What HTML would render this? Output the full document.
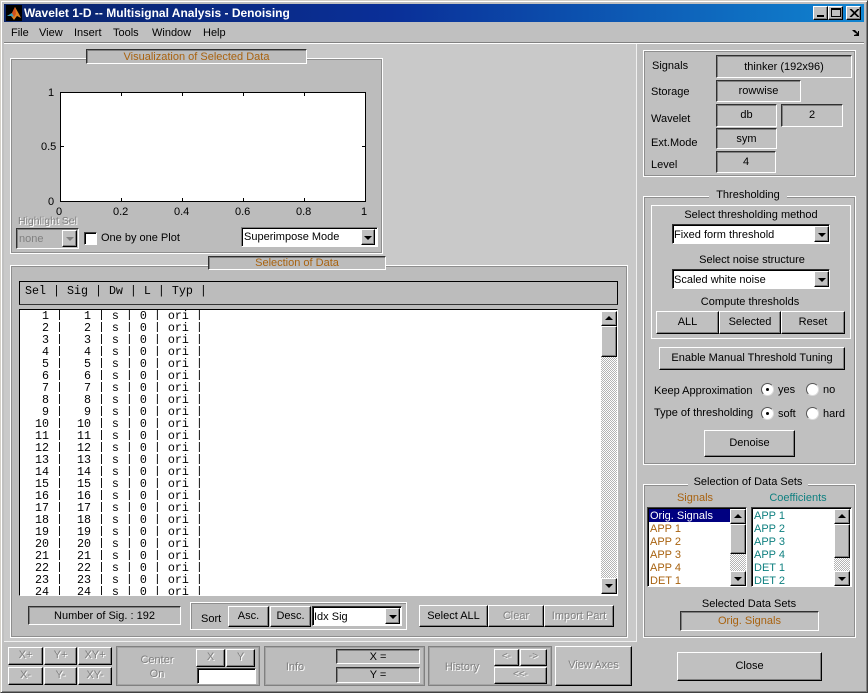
<!DOCTYPE html>
<html><head><meta charset="utf-8">
<style>
html,body{margin:0;padding:0}
body{width:868px;height:693px;overflow:hidden;background:#c0c0c0;position:relative;font:11px "Liberation Sans",sans-serif;color:#000}
div,span,pre{position:absolute;box-sizing:border-box;margin:0}
.t{height:20px;line-height:20px;white-space:nowrap}
.c{text-align:center}
.p{border:1px solid #fff;box-shadow:inset 0 0 0 1px #8e8e8e;background:#bcbcbc}
.q{border:1px solid #fff;box-shadow:inset 0 0 0 1px #8e8e8e;background:#c0c0c0}
.g{border:1px solid #808080;box-shadow:inset 0 0 0 1px #a4a4a4;background:#bcbcbc}
.s{border:1px solid;border-color:#303030 #fff #fff #303030;box-shadow:inset 1px 1px 0 #808080;text-align:center;white-space:nowrap}
.b{border:1px solid;border-color:#fff #000 #000 #fff;box-shadow:inset -1px -1px 0 #808080;background:#c0c0c0;text-align:center;white-space:nowrap}
.d{color:#808080;text-shadow:1px 1px 0 #fff}
.w{background:#fff;border:1px solid;border-color:#404040 #fff #fff #404040;box-shadow:inset 1px 1px 0 #000}
.o{color:#a8620f}
.e{color:#0f8080}
.a{width:0;height:0;border-left:4px solid transparent;border-right:4px solid transparent}
.dn{border-top:4px solid #000}
.up{border-bottom:4px solid #000}
.h{background:repeating-conic-gradient(#fff 0 25%,#b4b4b4 0 50%) 0 0/2px 2px}
.r{width:13px;height:13px;border-radius:50%;background:#fff;border:1px solid;border-color:#555 #ddd #ddd #555}
.r i{position:absolute;left:4px;top:4px;width:3px;height:3px;background:#000;border-radius:50%}
</style></head><body>
<div style="left:0;top:0;width:868px;height:693px;border:1px solid;border-color:#d4d0c8 #404040 #404040 #d4d0c8;box-shadow:inset 1px 1px 0 #fff,inset -1px -1px 0 #808080"></div>
<!-- title bar -->
<div style="left:4px;top:4px;width:860px;height:18px;background:linear-gradient(90deg,#0a246a,#0a2f98 45%,#1084d0)"></div>
<div style="left:6px;top:5px;width:16px;height:16px;background:#000"></div>
<svg style="position:absolute;left:6px;top:5px" width="16" height="16" viewBox="0 0 16 16"><path d="M1 11 L6 8 L9 2 L13 9 L15 13 L11 11 L8 15 L5 11Z" fill="#e08020"/><path d="M1 11 L6 8 L8 12 L5 11Z" fill="#30a0c0"/><path d="M6 8 L9 2 L10 9 L8 12Z" fill="#d05020"/></svg>
<div class="t" style="left:24px;top:3px;font-weight:bold;font-size:12px;color:#fff">Wavelet 1-D -- Multisignal Analysis - Denoising</div>
<div class="b" style="left:813px;top:6px;width:15px;height:14px"><div style="left:3px;top:8px;width:7px;height:2px;background:#000"></div></div>
<div class="b" style="left:828px;top:6px;width:15px;height:14px"><div style="left:2px;top:1px;width:10px;height:9px;border:1px solid #000;border-top-width:2px"></div></div>
<div class="b" style="left:846px;top:6px;width:15px;height:14px"><svg style="position:absolute;left:2px;top:2px" width="10" height="8"><path d="M1 0L9 8M2 0L10 8M9 0L1 8M10 0L2 8" stroke="#000" stroke-width="1"/></svg></div>
<!-- menu -->
<div class="t" style="left:11px;top:23px">File</div>
<div class="t" style="left:39px;top:23px">View</div>
<div class="t" style="left:74px;top:23px">Insert</div>
<div class="t" style="left:113px;top:23px">Tools</div>
<div class="t" style="left:152px;top:23px">Window</div>
<div class="t" style="left:203px;top:23px">Help</div>
<svg style="position:absolute;left:851px;top:29px" width="10" height="8"><path d="M1 1L4 1L7 4L7 2L8 2L8 7L3 7L3 6L6 5L3 3Z" fill="#000"/></svg>
<div style="left:4px;top:42px;width:860px;height:2px;background:linear-gradient(#808080 50%,#fff 50%)"></div>
<!-- light left area -->
<div style="left:4px;top:44px;width:632px;height:597px;background:#c9c9c9"></div>
<div style="left:4px;top:641px;width:632px;height:1px;background:#f0f0f0"></div>
<div style="left:636px;top:44px;width:1px;height:598px;background:#f0f0f0"></div>
<div style="left:627px;top:265px;width:1px;height:373px;background:#fff"></div>
<!-- panel 1 -->
<div class="p" style="left:10px;top:58px;width:373px;height:196px"></div>
<div class="s o" style="left:86px;top:49px;width:221px;height:15px;line-height:15px;background:#bcbcbc">Visualization of Selected Data</div>
<div style="left:60px;top:92px;width:306px;height:110px;background:#fff;border:1px solid #000"></div>
<div style="left:121px;top:93px;width:1px;height:3px;background:#000"></div><div style="left:182px;top:93px;width:1px;height:3px;background:#000"></div><div style="left:243px;top:93px;width:1px;height:3px;background:#000"></div><div style="left:304px;top:93px;width:1px;height:3px;background:#000"></div>
<div style="left:121px;top:198px;width:1px;height:3px;background:#000"></div><div style="left:182px;top:198px;width:1px;height:3px;background:#000"></div><div style="left:243px;top:198px;width:1px;height:3px;background:#000"></div><div style="left:304px;top:198px;width:1px;height:3px;background:#000"></div>
<div style="left:61px;top:146px;width:3px;height:1px;background:#000"></div><div style="left:362px;top:146px;width:3px;height:1px;background:#000"></div>
<div class="t" style="left:48px;top:83px">1</div>
<div class="t" style="left:41px;top:137px">0.5</div>
<div class="t" style="left:48px;top:192px">0</div>
<div class="t" style="left:56px;top:202px">0</div>
<div class="t" style="left:113px;top:202px">0.2</div>
<div class="t" style="left:174px;top:202px">0.4</div>
<div class="t" style="left:235px;top:202px">0.6</div>
<div class="t" style="left:296px;top:202px">0.8</div>
<div class="t" style="left:361px;top:202px">1</div>
<div class="t d" style="left:18px;top:211px;font-size:10.5px">Highlight Sel</div>
<div class="s" style="left:16px;top:228px;width:63px;height:21px;background:#bcbcbc"></div>
<div class="t d" style="left:19px;top:229px;text-shadow:none">none</div>
<div class="b" style="left:62px;top:230px;width:15px;height:17px"><div class="a" style="left:3px;top:6px;border-top:4px solid #808080"></div></div>
<div class="w" style="left:84px;top:232px;width:13px;height:13px"></div>
<div class="t" style="left:101px;top:228px">One by one Plot</div>
<div class="s" style="left:241px;top:227px;width:137px;height:20px;background:#fff;border-color:#808080 #fff #fff #808080;box-shadow:inset 1px 1px 0 #000"></div>
<div class="t" style="left:244px;top:227px">Superimpose Mode</div>
<div class="b" style="left:361px;top:229px;width:14px;height:16px"><div class="a dn" style="left:2px;top:6px"></div></div>
<!-- panel 2 -->
<div class="p" style="left:10px;top:265px;width:618px;height:373px"></div>
<div class="s o" style="left:208px;top:256px;width:178px;height:14px;line-height:13px;background:#bcbcbc">Selection of Data</div>
<div style="left:19px;top:281px;width:599px;height:24px;border:1px solid #000;border-bottom-color:#333;background:#bcbcbc"></div>
<pre style="left:25px;top:284px;font:11.67px/14px 'Liberation Mono',monospace">Sel | Sig | Dw | L | Typ |</pre>
<div style="left:19px;top:309px;width:599px;height:287px;background:#fff;border:1px solid;border-color:#000 #fff #fff #000;overflow:hidden"><pre style="left:1px;top:0;font:11.67px/12px 'Liberation Mono',monospace">   1 |   1 | s | 0 | ori |
   2 |   2 | s | 0 | ori |
   3 |   3 | s | 0 | ori |
   4 |   4 | s | 0 | ori |
   5 |   5 | s | 0 | ori |
   6 |   6 | s | 0 | ori |
   7 |   7 | s | 0 | ori |
   8 |   8 | s | 0 | ori |
   9 |   9 | s | 0 | ori |
  10 |  10 | s | 0 | ori |
  11 |  11 | s | 0 | ori |
  12 |  12 | s | 0 | ori |
  13 |  13 | s | 0 | ori |
  14 |  14 | s | 0 | ori |
  15 |  15 | s | 0 | ori |
  16 |  16 | s | 0 | ori |
  17 |  17 | s | 0 | ori |
  18 |  18 | s | 0 | ori |
  19 |  19 | s | 0 | ori |
  20 |  20 | s | 0 | ori |
  21 |  21 | s | 0 | ori |
  22 |  22 | s | 0 | ori |
  23 |  23 | s | 0 | ori |
  24 |  24 | s | 0 | ori |</pre>
<div style="left:0;top:0;width:580px;height:285px;background:repeating-linear-gradient(transparent 0 10px,#fff 10px 12px)"></div></div>
<div class="h" style="left:601px;top:311px;width:16px;height:283px"></div>
<div class="b" style="left:601px;top:311px;width:16px;height:15px"><div class="a up" style="left:3px;top:4px"></div></div>
<div class="b" style="left:601px;top:326px;width:16px;height:31px"></div>
<div class="b" style="left:601px;top:578px;width:16px;height:16px"><div class="a dn" style="left:3px;top:5px"></div></div>
<div class="s" style="left:28px;top:606px;width:153px;height:19px;line-height:19px;background:#bcbcbc">Number of Sig. : 192</div>
<div class="p" style="left:190px;top:602px;width:217px;height:28px;box-shadow:inset 1px 1px 0 #8e8e8e"></div>
<div class="t" style="left:201px;top:609px">Sort</div>
<div class="b" style="left:228px;top:606px;width:41px;height:21px;line-height:19px">Asc.</div>
<div class="b" style="left:270px;top:606px;width:41px;height:21px;line-height:19px">Desc.</div>
<div class="s" style="left:312px;top:606px;width:90px;height:20px;background:#fff;box-shadow:inset 1px 1px 0 #000"></div>
<div class="t" style="left:314px;top:607px">Idx Sig</div>
<div class="b" style="left:385px;top:608px;width:15px;height:16px"><div class="a dn" style="left:3px;top:6px"></div></div>
<div class="b" style="left:419px;top:605px;width:69px;height:22px;line-height:20px">Select ALL</div>
<div class="b d" style="left:488px;top:605px;width:56px;height:22px;line-height:20px">Clear</div>
<div class="b d" style="left:544px;top:605px;width:70px;height:22px;line-height:20px">Import Part</div>
<!-- bottom tools -->
<div class="b d" style="left:8px;top:647px;width:35px;height:18px;line-height:15px">X+</div>
<div class="b d" style="left:44px;top:647px;width:33px;height:18px;line-height:15px">Y+</div>
<div class="b d" style="left:78px;top:647px;width:34px;height:18px;line-height:15px">XY+</div>
<div class="b d" style="left:8px;top:667px;width:35px;height:18px;line-height:15px">X-</div>
<div class="b d" style="left:44px;top:667px;width:33px;height:18px;line-height:15px">Y-</div>
<div class="b d" style="left:78px;top:667px;width:34px;height:18px;line-height:15px">XY-</div>
<div class="g" style="left:116px;top:646px;width:144px;height:40px"></div>
<div class="t c d" style="left:127px;top:650px;width:60px">Center</div>
<div class="t c d" style="left:127px;top:664px;width:60px">On</div>
<div class="b d" style="left:196px;top:649px;width:29px;height:18px;line-height:15px">X</div>
<div class="b d" style="left:226px;top:649px;width:29px;height:18px;line-height:15px">Y</div>
<div class="w" style="left:197px;top:668px;width:59px;height:16px"></div>
<div class="g" style="left:264px;top:646px;width:161px;height:40px"></div>
<div class="t c d" style="left:265px;top:657px;width:60px">Info</div>
<div class="s" style="left:336px;top:649px;width:84px;height:15px;line-height:15px;background:#bcbcbc">X =</div>
<div class="s" style="left:336px;top:667px;width:84px;height:16px;line-height:15px;background:#bcbcbc">Y =</div>
<div class="g" style="left:428px;top:646px;width:124px;height:40px"></div>
<div class="t c d" style="left:432px;top:657px;width:60px">History</div>
<div class="b d" style="left:494px;top:649px;width:25px;height:17px;line-height:14px;font-size:10px">&lt;-</div>
<div class="b d" style="left:520px;top:649px;width:27px;height:17px;line-height:14px;font-size:10px">-&gt;</div>
<div class="b d" style="left:494px;top:667px;width:53px;height:17px;line-height:14px;font-size:10px">&lt;&lt;-</div>
<div class="b d" style="left:555px;top:646px;width:77px;height:40px;line-height:36px">View Axes</div>
<!-- right: signals -->
<div class="q" style="left:643px;top:50px;width:213px;height:127px"></div>
<div class="t" style="left:652px;top:56px">Signals</div>
<div class="t" style="left:651px;top:82px">Storage</div>
<div class="t" style="left:651px;top:109px">Wavelet</div>
<div class="t" style="left:651px;top:133px">Ext.Mode</div>
<div class="t" style="left:651px;top:155px">Level</div>
<div class="s" style="left:716px;top:55px;width:136px;height:23px;line-height:22px">thinker (192x96)</div>
<div class="s" style="left:716px;top:80px;width:85px;height:22px;line-height:21px">rowwise</div>
<div class="s" style="left:716px;top:104px;width:61px;height:23px;line-height:21px">db</div>
<div class="s" style="left:781px;top:104px;width:62px;height:23px;line-height:21px">2</div>
<div class="s" style="left:716px;top:128px;width:61px;height:21px;line-height:20px">sym</div>
<div class="s" style="left:716px;top:151px;width:60px;height:22px;line-height:21px">4</div>
<!-- thresholding -->
<div class="q" style="left:643px;top:196px;width:213px;height:269px"></div>
<div class="t c" style="left:709px;top:185px;width:78px;background:#c0c0c0">Thresholding</div>
<div style="left:651px;top:205px;width:200px;height:134px;border:1px solid #fff"></div>
<div class="t c" style="left:652px;top:205px;width:198px">Select thresholding method</div>
<div class="s" style="left:672px;top:224px;width:158px;height:20px;background:#fff;box-shadow:inset 1px 1px 0 #000"></div>
<div class="t" style="left:674px;top:225px">Fixed form threshold</div>
<div class="b" style="left:814px;top:226px;width:15px;height:16px"><div class="a dn" style="left:3px;top:6px"></div></div>
<div class="t c" style="left:652px;top:250px;width:200px">Select noise structure</div>
<div class="s" style="left:672px;top:269px;width:158px;height:20px;background:#fff;box-shadow:inset 1px 1px 0 #000"></div>
<div class="t" style="left:674px;top:270px">Scaled white noise</div>
<div class="b" style="left:814px;top:271px;width:15px;height:16px"><div class="a dn" style="left:3px;top:6px"></div></div>
<div class="t c" style="left:650px;top:292px;width:200px">Compute thresholds</div>
<div class="b" style="left:656px;top:311px;width:63px;height:23px;line-height:20px">ALL</div>
<div class="b" style="left:719px;top:311px;width:62px;height:23px;line-height:20px">Selected</div>
<div class="b" style="left:781px;top:311px;width:64px;height:23px;line-height:20px">Reset</div>
<div class="b" style="left:659px;top:347px;width:186px;height:23px;line-height:21px">Enable Manual Threshold Tuning</div>
<div class="t" style="left:654px;top:381px">Keep Approximation</div>
<div class="r" style="left:761px;top:383px"><i></i></div>
<div class="t" style="left:778px;top:380px">yes</div>
<div class="r" style="left:806px;top:383px"></div>
<div class="t" style="left:823px;top:380px">no</div>
<div class="t" style="left:654px;top:403px">Type of thresholding</div>
<div class="r" style="left:761px;top:407px"><i></i></div>
<div class="t" style="left:778px;top:404px">soft</div>
<div class="r" style="left:806px;top:407px"></div>
<div class="t" style="left:823px;top:404px">hard</div>
<div class="b" style="left:704px;top:430px;width:91px;height:27px;line-height:25px">Denoise</div>
<!-- data sets -->
<div class="q" style="left:643px;top:484px;width:213px;height:154px"></div>
<div class="t c" style="left:688px;top:473px;width:120px;background:#c0c0c0;height:14px;line-height:19px">Selection of Data Sets</div>
<div class="t c o" style="left:655px;top:488px;width:80px">Signals</div>
<div class="t c e" style="left:758px;top:488px;width:80px">Coefficients</div>
<div class="w" style="left:647px;top:507px;width:100px;height:80px"></div>
<div style="left:649px;top:509px;width:81px;height:13px;background:#000080"></div>
<div class="t" style="left:650px;top:506px;color:#fff">Orig. Signals</div>
<div class="t o" style="left:650px;top:519px">APP 1</div>
<div class="t o" style="left:650px;top:532px">APP 2</div>
<div class="t o" style="left:650px;top:545px">APP 3</div>
<div class="t o" style="left:650px;top:558px">APP 4</div>
<div class="t o" style="left:650px;top:571px">DET 1</div>
<div class="h" style="left:730px;top:509px;width:16px;height:76px"></div>
<div class="b" style="left:730px;top:509px;width:16px;height:15px"><div class="a up" style="left:3px;top:4px"></div></div>
<div class="b" style="left:730px;top:524px;width:16px;height:30px"></div>
<div class="b" style="left:730px;top:571px;width:16px;height:15px"><div class="a dn" style="left:3px;top:5px"></div></div>
<div class="w" style="left:751px;top:507px;width:101px;height:80px"></div>
<div class="t e" style="left:754px;top:506px">APP 1</div>
<div class="t e" style="left:754px;top:519px">APP 2</div>
<div class="t e" style="left:754px;top:532px">APP 3</div>
<div class="t e" style="left:754px;top:545px">APP 4</div>
<div class="t e" style="left:754px;top:558px">DET 1</div>
<div class="t e" style="left:754px;top:571px">DET 2</div>
<div class="h" style="left:834px;top:509px;width:16px;height:76px"></div>
<div class="b" style="left:834px;top:509px;width:16px;height:15px"><div class="a up" style="left:3px;top:4px"></div></div>
<div class="b" style="left:834px;top:524px;width:16px;height:34px"></div>
<div class="b" style="left:834px;top:571px;width:16px;height:15px"><div class="a dn" style="left:3px;top:5px"></div></div>
<div class="t c" style="left:649px;top:594px;width:200px">Selected Data Sets</div>
<div class="s o" style="left:680px;top:611px;width:139px;height:20px;line-height:19px">Orig. Signals</div>
<div class="b" style="left:677px;top:652px;width:145px;height:29px;line-height:27px">Close</div>
</body></html>
